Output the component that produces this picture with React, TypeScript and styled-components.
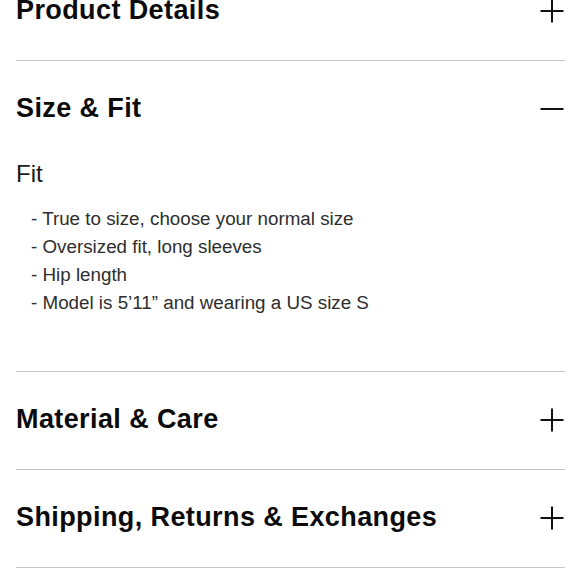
import React from "react";
import styled, { createGlobalStyle } from "styled-components";

const GlobalStyle = createGlobalStyle`
  html, body {
    margin: 0;
    padding: 0;
    background: #ffffff;
    overflow: hidden;
  }
  body {
    font-family: "Liberation Sans", Arial, sans-serif;
    color: #111111;
  }
`;

const Page = styled.div`
  width: 580px;
  height: 580px;
  overflow: hidden;
  padding: 0 15px 0 16px;
  box-sizing: border-box;
`;

const List = styled.div`
  margin-top: -37px;
`;

const Section = styled.section`
  border-bottom: 1px solid #c6c6c6;
`;

const Header = styled.button`
  all: unset;
  box-sizing: border-box;
  width: 100%;
  height: 97px;
  padding-bottom: 2px;
  display: flex;
  align-items: center;
  justify-content: space-between;
  cursor: pointer;
`;

const Title = styled.h3`
  margin: 0;
  font-size: 27px;
  font-weight: 700;
  letter-spacing: 0.4px;
  color: #0b0b0b;
`;

const IconBox = styled.span`
  display: flex;
  width: 24px;
  height: 24px;
  margin-right: 1px;
`;

const Panel = styled.div`
  padding: 0 0 54px;
`;

const SubTitle = styled.div`
  font-size: 24px;
  line-height: 30px;
  color: #1a1a1a;
  margin: 1px 0 16px;
`;

const Bullets = styled.ul`
  list-style: none;
  margin: 0;
  padding: 0 0 0 15px;
`;

const Bullet = styled.li`
  font-size: 18.8px;
  line-height: 28px;
  color: #2e2e2e;
`;

type ToggleIconProps = { open: boolean };

function ToggleIcon({ open }: ToggleIconProps) {
  return (
    <IconBox>
      <svg width="24" height="24" viewBox="0 0 24 24" fill="none">
        <path d="M0.5 12H23.5" stroke="#111" strokeWidth="2" />
        {!open && <path d="M12 0.5V23.5" stroke="#111" strokeWidth="2" />}
      </svg>
    </IconBox>
  );
}

type Item = {
  title: string;
  open?: boolean;
};

const items: Item[] = [
  { title: "Product Details" },
  { title: "Size & Fit", open: true },
  { title: "Material & Care" },
  { title: "Shipping, Returns & Exchanges" },
];

const fitNotes = [
  "True to size, choose your normal size",
  "Oversized fit, long sleeves",
  "Hip length",
  "Model is 5\u201911\u201D and wearing a US size S",
];

export default function App() {
  return (
    <Page>
      <GlobalStyle />
      <List>
        {items.map((item) => (
          <Section key={item.title}>
            <Header>
              <Title>{item.title}</Title>
              <ToggleIcon open={!!item.open} />
            </Header>
            {item.open && (
              <Panel>
                <SubTitle>Fit</SubTitle>
                <Bullets>
                  {fitNotes.map((note) => (
                    <Bullet key={note}>- {note}</Bullet>
                  ))}
                </Bullets>
              </Panel>
            )}
          </Section>
        ))}
      </List>
    </Page>
  );
}
